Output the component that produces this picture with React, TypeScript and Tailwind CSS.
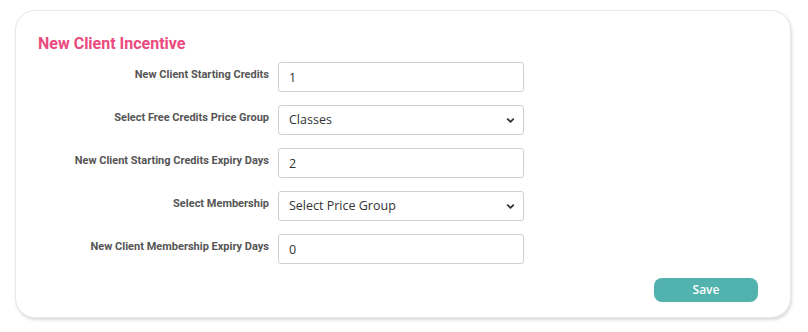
import { ChevronDown } from "lucide-react";

const label = "w-[253px] shrink-0 pt-[6px] text-right text-[11px] font-bold leading-[14px] text-[#555] [font-family:Roboto,sans-serif]";
const field =
  "h-[30px] w-[246px] rounded-[3px] border border-[#ccd0d6] bg-white px-[10px] text-[12.5px] text-[#333] outline-none [font-family:'Open_Sans',sans-serif]";

function TextRow({ name, value }: { name: string; value: string }) {
  return (
    <div className="flex gap-[9px]">
      <label className={label}>{name}</label>
      <input className={field} defaultValue={value} />
    </div>
  );
}

function SelectRow({ name, value }: { name: string; value: string }) {
  return (
    <div className="flex gap-[9px]">
      <label className={label}>{name}</label>
      <div className="relative">
        <select className={`${field} appearance-none`} defaultValue={value}>
          <option>{value}</option>
        </select>
        <ChevronDown
          className="pointer-events-none absolute right-[8px] top-[10px] h-[11px] w-[11px] text-[#333]"
          strokeWidth={4}
        />
      </div>
    </div>
  );
}

export default function App() {
  return (
    <div className="h-[332px] w-[808px] bg-white pt-[10px] pl-[15px]">
      <div className="flex h-[308px] w-[776px] flex-col rounded-[20px] border border-[#e8e8e8] bg-white pt-[23px] shadow-[1px_2px_3px_rgba(0,0,0,0.14)]">
        <h2 className="pl-[22px] text-[16px] font-bold leading-[19px] text-[#ea4a7e] [font-family:Roboto,sans-serif]">
          New Client Incentive
        </h2>

        <div className="mt-[9px] flex flex-col gap-[13px]">
          <TextRow name="New Client Starting Credits" value="1" />
          <SelectRow name="Select Free Credits Price Group" value="Classes" />
          <TextRow name="New Client Starting Credits Expiry Days" value="2" />
          <SelectRow name="Select Membership" value="Select Price Group" />
          <TextRow name="New Client Membership Expiry Days" value="0" />
        </div>

        <div className="mt-[14px] flex justify-end pr-[32px]">
          <button className="h-[24px] w-[104px] rounded-[8px] bg-[#52b3ae] text-[12px] font-semibold text-white [font-family:'Open_Sans',sans-serif]">
            Save
          </button>
        </div>
      </div>
    </div>
  );
}
